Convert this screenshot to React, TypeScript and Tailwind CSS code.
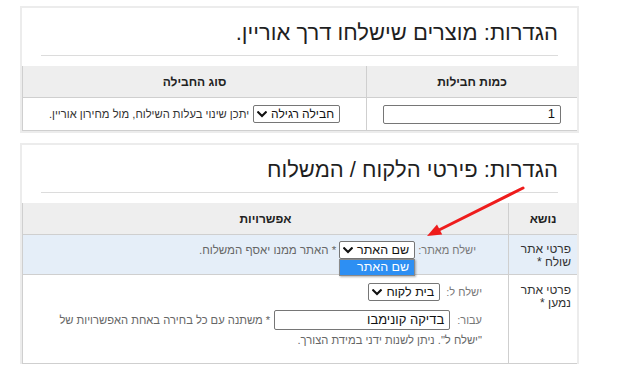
import React from "react";

function Chevron() {
  return (
    <svg width="10" height="7" viewBox="0 0 10 7" className="shrink-0">
      <path d="M1.2 1.2 L5 5 L8.8 1.2" fill="none" stroke="#111" strokeWidth="2.1" strokeLinecap="square" />
    </svg>
  );
}

function FakeSelect({ className, label, textClass }: { className: string; label: string; textClass: string }) {
  return (
    <div className={"flex items-center justify-between bg-white border border-[#767676] rounded-[2px] pr-[5px] pl-[3px] shrink-0 " + className}>
      <span className={"text-[#111] whitespace-nowrap " + textClass}>{label}</span>
      <Chevron />
    </div>
  );
}

export default function App() {
  return (
    <div className="relative w-[618px] h-[365px] overflow-hidden bg-white font-['Liberation_Sans',Arial,sans-serif] text-[#333]">
      <div className="pt-[6px] pl-[20px]">
        {/* Panel 1 */}
        <section dir="rtl" className="w-[559px] border-2 border-[#ececec]">
          <div className="px-[19px]">
            <h2 className="mt-[12px] h-[26px] text-[22px] leading-[26px] text-[#1f1f1f] whitespace-nowrap">הגדרות: מוצרים שישלחו דרך אוריין.</h2>
            <div className="mt-[9px] h-px bg-[#dcdcdc]" />
          </div>
          <div className="mt-[10px] border-l border-[#cfcfcf]">
            <div className="grid grid-cols-[211px_1fr] h-[32px] bg-[#eeeeee] border-b border-[#cfcfcf]">
              <div className="flex items-center justify-center border-l border-[#cfcfcf] font-bold text-[12px] text-[#222]">כמות חבילות</div>
              <div className="flex items-center justify-center font-bold text-[12px] text-[#222]">סוג החבילה</div>
            </div>
            <div className="grid grid-cols-[211px_1fr] h-[32px]">
              <div className="flex items-center justify-center border-l border-[#cfcfcf]">
                <div className="w-[178px] h-[19px] border border-[#767676] rounded-[2px] bg-white flex items-center pr-[5px] text-[13px] text-[#111]">1</div>
              </div>
              <div className="flex items-center justify-center gap-[4px]">
                <FakeSelect className="w-[87px] h-[18px]" label="חבילה רגילה" textClass="text-[12px]" />
                <span className="text-[11.2px] text-[#333] whitespace-nowrap">יתכן שינוי בעלות השילוח, מול מחירון אוריין.</span>
              </div>
            </div>
          </div>
          <div className="h-px bg-[#cfcfcf]" />
        </section>

        {/* Panel 2 */}
        <section dir="rtl" className="mt-[10px] w-[559px] border-2 border-b-0 border-[#ececec]">
          <div className="px-[19px]">
            <h2 className="mt-[12px] h-[26px] text-[22px] leading-[26px] text-[#1f1f1f] whitespace-nowrap">הגדרות: פירטי הלקוח / המשלוח</h2>
            <div className="mt-[9px] h-px bg-[#dcdcdc]" />
          </div>
          <div className="mt-[10px] border-l border-[#cfcfcf]">
            <div className="grid grid-cols-[69px_1fr] h-[32px] bg-[#eeeeee] border-b border-[#cfcfcf]">
              <div className="flex items-center justify-center border-l border-[#cfcfcf] font-bold text-[12px] text-[#222]">נושא</div>
              <div className="flex items-center justify-center font-bold text-[12px] text-[#222]">אפשרויות</div>
            </div>
            {/* Row 1 */}
            <div className="grid grid-cols-[69px_1fr] h-[40px] bg-[#e5eef8] border-b border-[#cfcfcf]">
              <div className="border-l border-[#cfcfcf] pr-[6px] pt-[8px] text-[12px] leading-[13px] text-[#333]">
                פרטי אתר
                <br />
                שולח *
              </div>
              <div className="pr-[32px] pt-[6px] flex items-start gap-[3px]">
                <span className="text-[11px] leading-[19px] text-[#777] whitespace-nowrap">ישלח מאתר:</span>
                <div className="relative">
                  <FakeSelect className="w-[76px] h-[18px]" label="שם האתר" textClass="text-[12.5px]" />
                  <div className="absolute top-[18px] right-0 w-[76px] h-[17px] bg-[#2d8ff3] border border-[#8a8a8a] shadow-[1px_1px_2px_rgba(0,0,0,0.3)] flex items-center pr-[5px] text-[12.5px] text-white whitespace-nowrap">שם האתר</div>
                </div>
                <span className="text-[11.5px] leading-[19px] text-[#666] whitespace-nowrap">* האתר ממנו יאסף המשלוח.</span>
              </div>
            </div>
            {/* Row 2 */}
            <div className="grid grid-cols-[69px_1fr] h-[89px] border-b border-[#cfcfcf]">
              <div className="border-l border-[#cfcfcf] pr-[6px] pt-[9px] text-[12px] leading-[13px] text-[#333]">
                פרטי אתר
                <br />
                נמען *
              </div>
              <div className="pr-[26px] pt-[8px] flex flex-col items-start">
                <div className="flex items-center gap-[6px] h-[18px]">
                  <span className="text-[11px] text-[#777] whitespace-nowrap">ישלח ל:</span>
                  <FakeSelect className="w-[72px] h-[18px]" label="בית לקוח" textClass="text-[12.5px]" />
                </div>
                <div className="mt-[9px] flex items-center h-[20px]">
                  <span className="text-[11px] text-[#777] whitespace-nowrap">עבור:</span>
                  <div className="mr-[7px] w-[176px] h-[20px] border border-[#767676] rounded-[2px] bg-white flex items-center pr-[5px] text-[13px] text-[#111] whitespace-nowrap">בדיקה קונימבו</div>
                  <span className="mr-[4px] text-[11.2px] text-[#666] whitespace-nowrap">* משתנה עם כל בחירה באחת האפשרויות של</span>
                </div>
                <div className="mt-[3px] text-[11.2px] leading-[15px] text-[#666] whitespace-nowrap">"ישלח ל". ניתן לשנות ידני במידת הצורך.</div>
              </div>
            </div>
          </div>
        </section>
      </div>

      {/* Red annotation arrow */}
      <svg className="absolute left-0 top-0 pointer-events-none" width="618" height="365">
        <line x1="523" y1="188" x2="436" y2="231.5" stroke="#ee1c1c" strokeWidth="3" strokeLinecap="round" />
        <polygon points="427,236 442.2,234.5 437,224.6" fill="#ee1c1c" />
      </svg>
    </div>
  );
}
